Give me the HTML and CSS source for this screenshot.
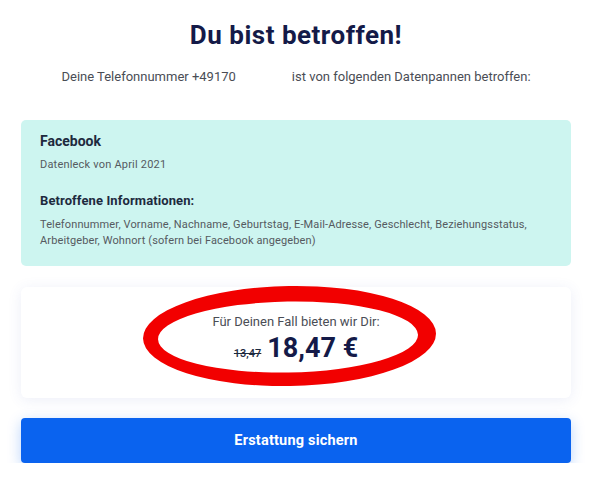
FILE: index.html
```html
<!DOCTYPE html>
<html lang="de">
<head>
<meta charset="utf-8">
<title>Du bist betroffen!</title>
<link rel="stylesheet" href="styles.css">
</head>
<body>
<main class="page">
  <h1 class="title">Du bist betroffen!</h1>
  <p class="intro">Deine Telefonnummer +49170<span class="redacted"></span>ist von folgenden Datenpannen betroffen:</p>

  <section class="breach">
    <h2 class="breach-name">Facebook</h2>
    <p class="breach-date">Datenleck von April 2021</p>
    <h3 class="breach-label">Betroffene Informationen:</h3>
    <p class="breach-info">Telefonnummer, Vorname, Nachname, Geburtstag, E-Mail-Adresse, Geschlecht, Beziehungsstatus, Arbeitgeber, Wohnort (sofern bei Facebook angegeben)</p>
  </section>

  <section class="offer">
    <p class="offer-text">Für Deinen Fall bieten wir Dir:</p>
    <p class="price"><s class="old-price">13,47</s><span class="new-price">18,47 €</span></p>
    <svg class="circle-mark" width="296" height="102" viewBox="0 0 296 102" aria-hidden="true">
      <path fill="#f20000" fill-rule="evenodd" d="M1,51 A146.5,50 0 1,0 294,51 A146.5,50 0 1,0 1,51 Z M16,52 A130,35.5 0 1,0 276,52 A130,35.5 0 1,0 16,52 Z" transform="rotate(-1 148 51)"/>
    </svg>
  </section>

  <button class="cta" type="button">Erstattung sichern</button>
</main>
</body>
</html>
```

FILE: styles.css
```css
* { box-sizing: border-box; }

html, body {
  margin: 0;
  padding: 0;
  background: #ffffff;
}

body {
  font-family: "Roboto", "Liberation Sans", sans-serif;
  color: #1c2740;
}

.page {
  width: 550px;
  margin-left: 21px;
  padding-top: 20px;
  display: flex;
  flex-direction: column;
}

.title {
  margin: 0;
  font-size: 26px;
  line-height: 30px;
  font-weight: 700;
  letter-spacing: 0.5px;
  text-align: center;
  color: #141a48;
}

.intro {
  margin: 18px 0 0;
  font-size: 13px;
  line-height: 18px;
  text-align: center;
  color: #4a4d55;
}

.redacted {
  display: inline-block;
  width: 56px;
}

.breach {
  margin-top: 34px;
  background: #cdf5f0;
  border-radius: 5px;
  padding: 12px 19px 17px;
}

.breach-name {
  margin: 0;
  font-size: 14px;
  line-height: 18px;
  font-weight: 700;
  color: #1d2a3e;
}

.breach-date {
  margin: 7px 0 0;
  font-size: 11px;
  line-height: 16px;
  letter-spacing: 0.2px;
  color: #555a60;
}

.breach-label {
  margin: 19px 0 0;
  font-size: 13px;
  line-height: 18px;
  font-weight: 700;
  letter-spacing: 0.1px;
  color: #1d2a3e;
}

.breach-info {
  margin: 7px 0 0;
  font-size: 11px;
  line-height: 16px;
  letter-spacing: 0.12px;
  color: #555a60;
}

.offer {
  position: relative;
  margin-top: 21px;
  background: #ffffff;
  border-radius: 6px;
  box-shadow: 0 2px 14px rgba(70, 90, 190, 0.1);
  padding: 26px 0 28px;
  text-align: center;
}

.offer-text {
  margin: 0;
  font-size: 13px;
  line-height: 18px;
  color: #4a4d55;
}

.price {
  margin: 1px 0 0;
  line-height: 32px;
  display: flex;
  justify-content: center;
  align-items: baseline;
  gap: 6px;
  color: #141a48;
}

.old-price {
  font-size: 11px;
  font-weight: 500;
  color: #1d2a3e;
}

.new-price {
  font-size: 27px;
  font-weight: 700;
}

.circle-mark {
  position: absolute;
  left: 121px;
  top: -2px;
  overflow: visible;
  pointer-events: none;
}

.cta {
  margin-top: 20px;
  height: 45px;
  border: 0;
  border-radius: 4px;
  background: #0a63ef;
  color: #ffffff;
  font-family: inherit;
  font-size: 14.5px;
  font-weight: 700;
  letter-spacing: 0.2px;
  box-shadow: 0 4px 14px rgba(10, 99, 239, 0.28);
}
```
